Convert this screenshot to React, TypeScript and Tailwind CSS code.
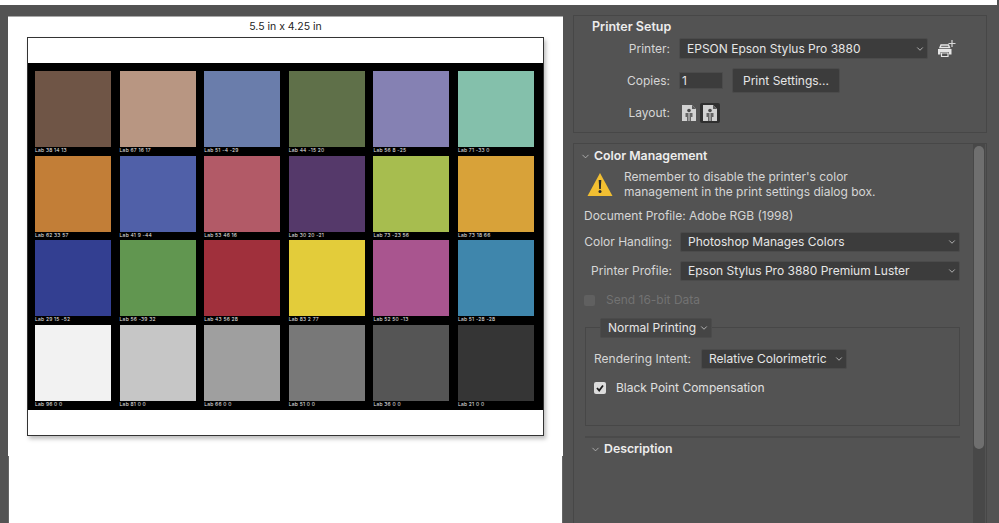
import { ChevronDown } from 'lucide-react';

const patches = [
  ['#6f5546', 'Lab 38 14 13'],
  ['#b89682', 'Lab 67 16 17'],
  ['#6a7dab', 'Lab 51 -4 -29'],
  ['#5f7049', 'Lab 44 -15 20'],
  ['#8581b3', 'Lab 56 8 -25'],
  ['#84c0ab', 'Lab 71 -33 0'],
  ['#c27e37', 'Lab 62 33 57'],
  ['#5060a8', 'Lab 41 9 -44'],
  ['#b25a67', 'Lab 53 46 16'],
  ['#55396a', 'Lab 30 20 -21'],
  ['#a7bd4f', 'Lab 73 -23 56'],
  ['#d8a239', 'Lab 73 18 66'],
  ['#333f91', 'Lab 29 15 -52'],
  ['#619650', 'Lab 56 -39 32'],
  ['#a0303c', 'Lab 43 56 28'],
  ['#e3cc3a', 'Lab 83 2 77'],
  ['#a9558f', 'Lab 52 50 -13'],
  ['#3f86ac', 'Lab 51 -28 -28'],
  ['#f2f2f2', 'Lab 96 0 0'],
  ['#c6c6c6', 'Lab 81 0 0'],
  ['#9f9f9f', 'Lab 66 0 0'],
  ['#787878', 'Lab 51 0 0'],
  ['#555555', 'Lab 36 0 0'],
  ['#353535', 'Lab 21 0 0'],
];

function Select({ label, className }: { label: string; className: string }) {
  return (
    <div
      className={`flex items-center justify-between rounded-[2px] border border-[#4b4b4b] bg-[#3c3c3c] pl-[7px] pr-[2px] text-[12px] leading-none text-[#e6e6e6] ${className}`}
    >
      <span className="whitespace-nowrap">{label}</span>
      <ChevronDown size={10} strokeWidth={2} className="text-[#c8c8c8]" />
    </div>
  );
}

function LayoutIcon({ active }: { active?: boolean }) {
  return (
    <div className={`flex h-5 w-5 items-center justify-center rounded-[2px] ${active ? 'bg-[#2f2f2f]' : ''}`}>
      <svg width="14" height="16" viewBox="0 0 14 16">
        <path d="M0 0H10L14 4V16H0Z" fill="#d2d2d2" />
        <path d="M10 0L14 4H10Z" fill="#5a5a5a" />
        <circle cx="7" cy="5.5" r="1.8" fill="#4a4a4a" />
        <path d="M3.5 8H10.5V12H9V16H5V12H3.5Z" fill="#666" />
        <path d="M6.5 8H7.5V16H6.5Z" fill="#d2d2d2" />
      </svg>
    </div>
  );
}

export default function App() {
  return (
    <div className="flex h-[523px] w-[999px] flex-col overflow-hidden bg-[#535353] font-['Inter',sans-serif]">
      <div className="h-[5px] w-[997px] shrink-0 bg-white" />
      <div className="flex min-h-0 flex-1">
        {/* Print preview */}
        <div className="mt-[11px] ml-2 flex w-[555px] flex-col border-t border-[#a8a8a8] bg-white">
          <div className="flex h-[20px] items-center justify-center text-[10.5px] leading-none text-[#222]">
            5.5 in x 4.25 in
          </div>
          <div className="mx-[19px] h-[399px] border border-[#333] bg-white shadow-[2px_3px_4px_rgba(0,0,0,0.25)]">
            <div className="mt-[25px] h-[347px] bg-black pt-2 pl-[7px]">
              <div className="grid grid-cols-[repeat(6,76px)] gap-x-[8.6px]">
                {patches.map(([color, label]) => (
                  <div key={label} className="h-[84.6px]">
                    <div className="h-[76px] w-[76px]" style={{ backgroundColor: color }} />
                    <div className="text-[5px] leading-[7px] tracking-[0.2px] whitespace-nowrap text-[#e8e8e8]">
                      {label}
                    </div>
                  </div>
                ))}
              </div>
            </div>
          </div>
          <div className="h-[20px] shrink-0" />
          <div className="flex-1 border-x border-[#666]" />
        </div>

        {/* Settings */}
        <div className="ml-[10px] flex w-[414px] flex-col">
          <div className="mt-[10px] h-[118px] shrink-0 border border-[#474747] pt-[4px]">
            <div className="pl-[18px] text-[12.5px] leading-[14px] font-semibold text-[#ededed]">Printer Setup</div>
            <div className="mt-[4px] flex items-center">
              <div className="w-[96px] text-right text-[12px] text-[#d6d6d6]">Printer:</div>
              <Select label="EPSON Epson Stylus Pro 3880" className="ml-[9px] h-[21px] w-[249px]" />
              <svg width="20" height="20" viewBox="0 0 20 20" className="ml-[9px]">
                <path d="M3 8.5L4 6H11.5L12.5 8.5Z" fill="none" stroke="#e6e6e6" strokeWidth="1.4" />
                <path d="M1 10H14.5V15.5H12V13H3.5V15.5H1Z" fill="#e6e6e6" />
                <path d="M4.5 14H11V17.5H4.5Z" fill="none" stroke="#e6e6e6" strokeWidth="1.2" />
                <path d="M15 1V8M11.5 4.5H18.5" stroke="#d8d8d8" strokeWidth="1.2" />
              </svg>
            </div>
            <div className="mt-[9px] flex items-center">
              <div className="w-[96px] text-right text-[12px] text-[#d6d6d6]">Copies:</div>
              <div className="ml-[9px] flex h-[17px] w-[44px] items-center rounded-[1px] border border-[#4b4b4b] bg-[#3c3c3c] pl-[2px] text-[12px] leading-none text-[#e6e6e6]">
                1
              </div>
              <div className="ml-[9px] flex h-[25px] w-[108px] items-center justify-center rounded-[2px] border border-[#4b4b4b] bg-[#3c3c3c] text-[12px] leading-none text-[#e6e6e6]">
                Print Settings...
              </div>
            </div>
            <div className="mt-[10px] flex items-center">
              <div className="w-[96px] text-right text-[12px] text-[#d6d6d6]">Layout:</div>
              <div className="ml-[9px] flex gap-[1px]">
                <LayoutIcon />
                <LayoutIcon active />
              </div>
            </div>
          </div>

          <div className="mt-[10px] flex min-h-0 flex-1 border-x border-t border-[#474747]">
            <div className="w-[399px] shrink-0 pl-[6px] text-[12px] leading-none text-[#d6d6d6]">
              <div className="mt-[5px] flex h-[14px] items-center">
                <ChevronDown size={11} strokeWidth={1.5} className="text-[#cfcfcf]" />
                <span className="ml-[3px] text-[12.3px] font-semibold text-[#ededed]">Color Management</span>
              </div>
              <div className="mt-[6px] flex items-center">
                <svg width="26" height="24" viewBox="0 0 26 24" className="ml-[7px]">
                  <path d="M13 1L25.5 24H.5Z" fill="#f2bf32" />
                  <path d="M11.7 8H14.3L13.8 17H12.2Z" fill="#2b2b2b" />
                  <circle cx="13" cy="19.5" r="1.5" fill="#2b2b2b" />
                </svg>
                <div className="ml-[11px] leading-[15px]">
                  Remember to disable the printer's color
                  <br />
                  management in the print settings dialog box.
                </div>
              </div>
              <div className="mt-[11px] ml-[4px]">Document Profile: Adobe RGB (1998)</div>
              <div className="mt-[10px] flex items-center">
                <div className="w-[92px] text-right whitespace-nowrap">Color Handling:</div>
                <Select label="Photoshop Manages Colors" className="ml-2 h-5 w-[280px]" />
              </div>
              <div className="mt-[9px] flex items-center">
                <div className="w-[92px] text-right whitespace-nowrap">Printer Profile:</div>
                <Select label="Epson Stylus Pro 3880 Premium Luster" className="ml-2 h-5 w-[280px]" />
              </div>
              <div className="mt-[13px] ml-[4px] flex items-center text-[#727272]">
                <div className="h-[11px] w-[11px] rounded-[2px] bg-[#606060]" />
                <span className="ml-[11px]">Send 16-bit Data</span>
              </div>

              <div className="relative mt-[21px] ml-[5px] h-[99px] w-[375px] border border-[#474747] pt-[21px] pl-[8px]">
                <Select
                  label="Normal Printing"
                  className="absolute -top-[10px] left-[14px] h-5 w-[112px] !bg-[#454545]"
                />
                <div className="flex items-center">
                  <span className="whitespace-nowrap">Rendering Intent:</span>
                  <Select label="Relative Colorimetric" className="ml-[10px] h-5 w-[146px]" />
                </div>
                <div className="mt-[13px] flex items-center text-[#e0e0e0]">
                  <div className="flex h-3 w-3 items-center justify-center rounded-[2px] bg-[#dcdcdc]">
                    <svg width="10" height="10" viewBox="0 0 10 10">
                      <path d="M2 5L4.2 7.5L8 2.5" fill="none" stroke="#1c1c1c" strokeWidth="1.8" />
                    </svg>
                  </div>
                  <span className="ml-[10px]">Black Point Compensation</span>
                </div>
              </div>

              <div className="mt-[10px] ml-[5px] h-[2px] w-[375px] bg-[#4a4a4a]" />
              <div className="mt-[4px] flex h-[14px] items-center pl-[10px]">
                <ChevronDown size={11} strokeWidth={1.5} className="text-[#cfcfcf]" />
                <span className="ml-[3px] text-[12.3px] font-semibold text-[#ededed]">Description</span>
              </div>
            </div>
            <div className="w-[12px] bg-[#484848] px-[1px] pt-[2px]">
              <div className="h-[303px] rounded-full bg-[#6f6f6f]" />
            </div>
          </div>
        </div>
      </div>
    </div>
  );
}
